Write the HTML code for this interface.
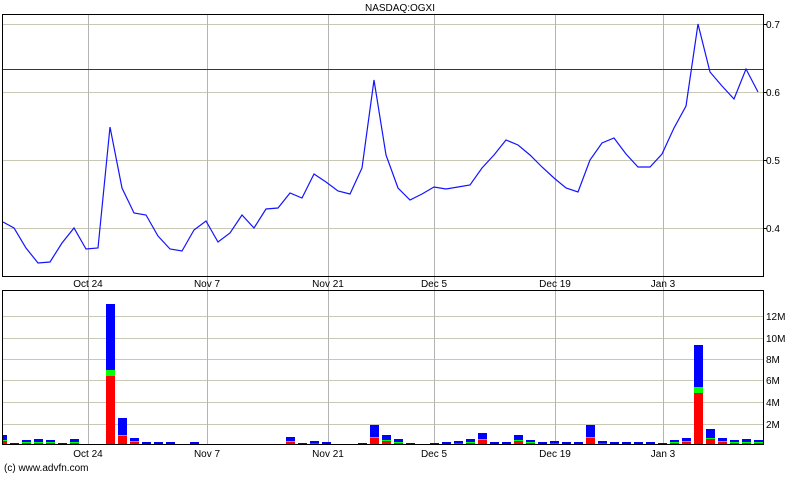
<!DOCTYPE html>
<html><head><style>
body{margin:0;background:#fff;width:800px;height:475px;overflow:hidden;font-family:"Liberation Sans",sans-serif}
svg text{font-family:"Liberation Sans",sans-serif;font-size:10px;fill:#000}
</style></head><body>
<svg width="800" height="475" xmlns="http://www.w3.org/2000/svg">
<text x="400" y="11" text-anchor="middle">NASDAQ:OGXI</text>
<g stroke="#c8c8b4" stroke-width="1">
<line x1="2" y1="24.5" x2="763" y2="24.5"/><line x1="2" y1="92.5" x2="763" y2="92.5"/>
<line x1="2" y1="160.5" x2="763" y2="160.5"/><line x1="2" y1="228.5" x2="763" y2="228.5"/>
<line x1="2" y1="316.5" x2="763" y2="316.5"/><line x1="2" y1="338.5" x2="763" y2="338.5"/>
<line x1="2" y1="359.5" x2="763" y2="359.5"/><line x1="2" y1="380.5" x2="763" y2="380.5"/>
<line x1="2" y1="402.5" x2="763" y2="402.5"/><line x1="2" y1="424.5" x2="763" y2="424.5"/>
</g>
<g stroke="#b4b4b4" stroke-width="1">
<line x1="88.5" y1="14" x2="88.5" y2="445"/><line x1="207.5" y1="14" x2="207.5" y2="445"/>
<line x1="328.5" y1="14" x2="328.5" y2="445"/><line x1="434.5" y1="14" x2="434.5" y2="445"/>
<line x1="555.5" y1="14" x2="555.5" y2="445"/><line x1="663.5" y1="14" x2="663.5" y2="445"/>
</g>
<line x1="2" y1="69.5" x2="763" y2="69.5" stroke="#c00000"/>
<polyline fill="none" stroke="#1414ff" stroke-width="1.2" points="3,222 14,228 26,248 38,263 50,262 62,243 74,228 86,249 98,248 110,127 122,188 134,213 146,215 158,236 170,249 182,251 194,230 206,221 218,242 230,233 242,215 254,228 266,209 278,208 290,193 302,198 314,174 326,182 338,191 350,194 362,168 374,80 386,155 398,188 410,200 422,194 434,187 446,189 458,187 470,185 482,168 494,155 506,140 518,145 530,155 542,167 554,178 566,188 578,192 590,160 602,143 614,138 626,154 638,167 650,167 662,154 674,128 686,106 698,24 710,72 722,86 734,99 746,69 758,92"/>
<g id="bars"></g>
<rect x="2.5" y="14.5" width="761" height="262" fill="none" stroke="#000"/>
<rect x="2.5" y="290.5" width="761" height="154" fill="none" stroke="#000"/>
<g font-size="10">
<text x="766" y="28">0.7</text><text x="766" y="96">0.6</text><text x="766" y="164">0.5</text><text x="766" y="232">0.4</text>
<text x="766" y="320">12M</text><text x="766" y="342">10M</text><text x="766" y="363">8M</text><text x="766" y="384">6M</text><text x="766" y="406">4M</text><text x="766" y="428">2M</text>
<text x="88" y="287" text-anchor="middle">Oct 24</text><text x="207" y="287" text-anchor="middle">Nov 7</text><text x="328" y="287" text-anchor="middle">Nov 21</text><text x="434" y="287" text-anchor="middle">Dec 5</text><text x="555" y="287" text-anchor="middle">Dec 19</text><text x="663" y="287" text-anchor="middle">Jan 3</text>
<text x="88" y="457" text-anchor="middle">Oct 24</text><text x="207" y="457" text-anchor="middle">Nov 7</text><text x="328" y="457" text-anchor="middle">Nov 21</text><text x="434" y="457" text-anchor="middle">Dec 5</text><text x="555" y="457" text-anchor="middle">Dec 19</text><text x="663" y="457" text-anchor="middle">Jan 3</text>
<text x="4" y="471">(c) www.advfn.com</text>
</g>
<g stroke="#000">
<line x1="763" y1="24.5" x2="767" y2="24.5"/><line x1="763" y1="92.5" x2="767" y2="92.5"/><line x1="763" y1="160.5" x2="767" y2="160.5"/><line x1="763" y1="228.5" x2="767" y2="228.5"/>
</g>
</svg>
<script>
var h=[10,2,5,6,5,2,6,1,0,141,27,7,3,3,3,1,3,1,1,0,1,1,1,1,8,2,4,3,1,0,2,20,10,6,2,1,2,3,4,6,12,3,3,10,5,3,4,3,3,20,4,3,3,3,3,2,5,7,100,16,7,5,6,5];
var s='';
for(var i=0;i<h.length;i++){var v=h[i];if(!v)continue;var x=-2+12*i,w=9;if(x<3){w-=3-x;x=3;}
var r=v>100?69:v>90?52:v>15?Math.round(v*0.35):Math.round(v*0.4),g=v>90?6:v>4?1:0;
s+='<rect x="'+x+'" y="'+(445-v)+'" width="'+w+'" height="'+v+'" fill="#0000ff"/>';
if(r)s+='<rect x="'+x+'" y="'+(445-r)+'" width="'+w+'" height="'+r+'" fill="#ff0000"/>';
if(g)s+='<rect x="'+x+'" y="'+(445-r-g)+'" width="'+w+'" height="'+g+'" fill="#00ff00"/>';}
document.getElementById('bars').innerHTML=s;
</script>
</body></html>
